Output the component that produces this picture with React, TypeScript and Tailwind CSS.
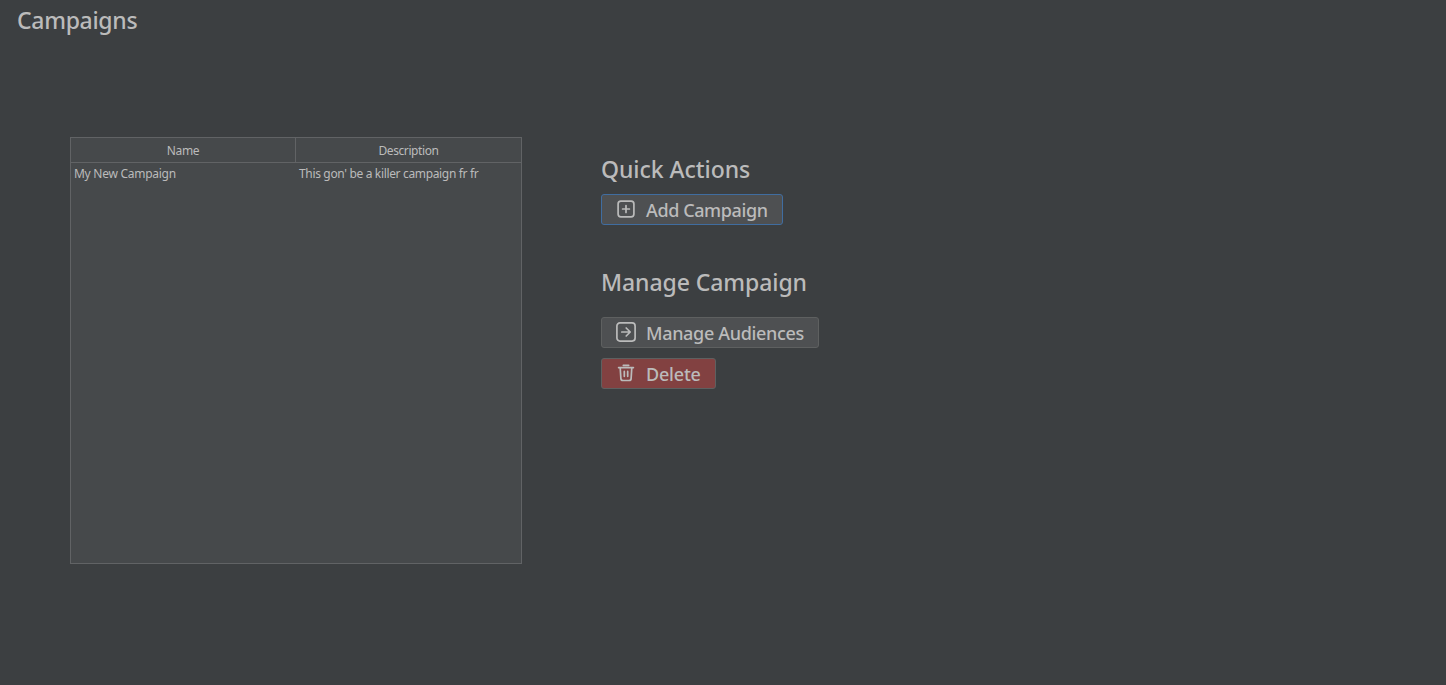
import type { ReactNode } from "react";

const campaigns = [
  { name: "My New Campaign", description: "This gon' be a killer campaign fr fr" },
];

function PlusSquareIcon() {
  return (
    <svg width="20" height="20" viewBox="0 0 20 20" fill="none" stroke="currentColor" strokeWidth="1.7" strokeLinecap="round">
      <rect x="2.1" y="2.1" width="15.8" height="15.8" rx="2.8" />
      <path d="M10 6.6v6.8M6.6 10h6.8" />
    </svg>
  );
}

function ArrowSquareIcon() {
  return (
    <svg width="20" height="20" viewBox="0 0 20 20" fill="none" stroke="currentColor" strokeWidth="1.7" strokeLinecap="round" strokeLinejoin="round">
      <rect x="0.9" y="0.9" width="18.2" height="18.2" rx="3" />
      <path d="M5.8 10h8.2M10.2 6L14.2 10l-4 4" />
    </svg>
  );
}

function TrashIcon() {
  return (
    <svg width="20" height="20" viewBox="0 0 20 20" fill="none" stroke="currentColor" strokeWidth="1.7" strokeLinecap="round" strokeLinejoin="round">
      <path d="M2.6 4.6h14.8M7.3 2.3h5.4M4.2 4.8l.7 10.8a2 2 0 0 0 2 1.9h6.2a2 2 0 0 0 2-1.9l.7-10.8M8.3 8.4v4.9M11.7 8.4v4.9" />
    </svg>
  );
}

function ActionButton({ className, icon, children }: { className: string; icon: ReactNode; children: ReactNode }) {
  return (
    <button
      className={`flex h-[31px] items-center gap-[10px] rounded-[3px] border pl-[14px] text-[18px] font-medium whitespace-nowrap ${className}`}
    >
      <span className="mb-[2px] shrink-0">{icon}</span>
      <span className="pt-[2px]">{children}</span>
    </button>
  );
}

export default function App() {
  return (
    <div className="h-[685px] w-full overflow-hidden bg-[#3c3f41] font-['Noto_Sans','Open_Sans',sans-serif] text-[#bbbbbb]">
      <h1 className="h-[137px] pt-[4px] pl-[17px] text-[23px] leading-[32px] font-medium tracking-[-0.3px]">Campaigns</h1>
      <main className="flex pl-[70px]">
        <section className="h-[427px] w-[452px] border border-[#616365] bg-[#46494b] text-[12px]">
          <div className="grid h-[25px] grid-cols-[225px_1fr] border-b border-[#616365] text-center leading-[26px]">
            <div className="h-[24px] border-r border-[#616365]">
              <span className="tracking-[-0.3px]">Name</span>
            </div>
            <div className="h-[24px]">
              <span className="tracking-[-0.4px]">Description</span>
            </div>
          </div>
          {campaigns.map((c) => (
            <div key={c.name} className="grid h-[22px] grid-cols-[225px_1fr] leading-[22px] whitespace-nowrap">
              <div className="pl-[3px] tracking-[-0.27px]">{c.name}</div>
              <div className="pl-[3px] tracking-[-0.34px]">{c.description}</div>
            </div>
          ))}
        </section>
        <aside className="flex flex-col items-start pt-[16px] pl-[79px]">
          <h2 className="h-[41px] text-[23px] leading-[32px] font-medium tracking-[-0.05px]">Quick Actions</h2>
          <ActionButton className="w-[182px] border-[#406da0] bg-[#4e5052]" icon={<PlusSquareIcon />}>
            <span className="tracking-[-0.4px]">Add Campaign</span>
          </ActionButton>
          <h2 className="mt-[41px] h-[51px] text-[23px] leading-[32px] font-medium tracking-[-0.08px]">Manage Campaign</h2>
          <ActionButton className="w-[218px] border-[#5e6060] bg-[#4e5052]" icon={<ArrowSquareIcon />}>
            <span className="tracking-[-0.33px]">Manage Audiences</span>
          </ActionButton>
          <ActionButton className="mt-[10px] w-[115px] border-[#5e6060] bg-[#824141]" icon={<TrashIcon />}>
            <span className="tracking-[-0.2px]">Delete</span>
          </ActionButton>
        </aside>
      </main>
    </div>
  );
}
